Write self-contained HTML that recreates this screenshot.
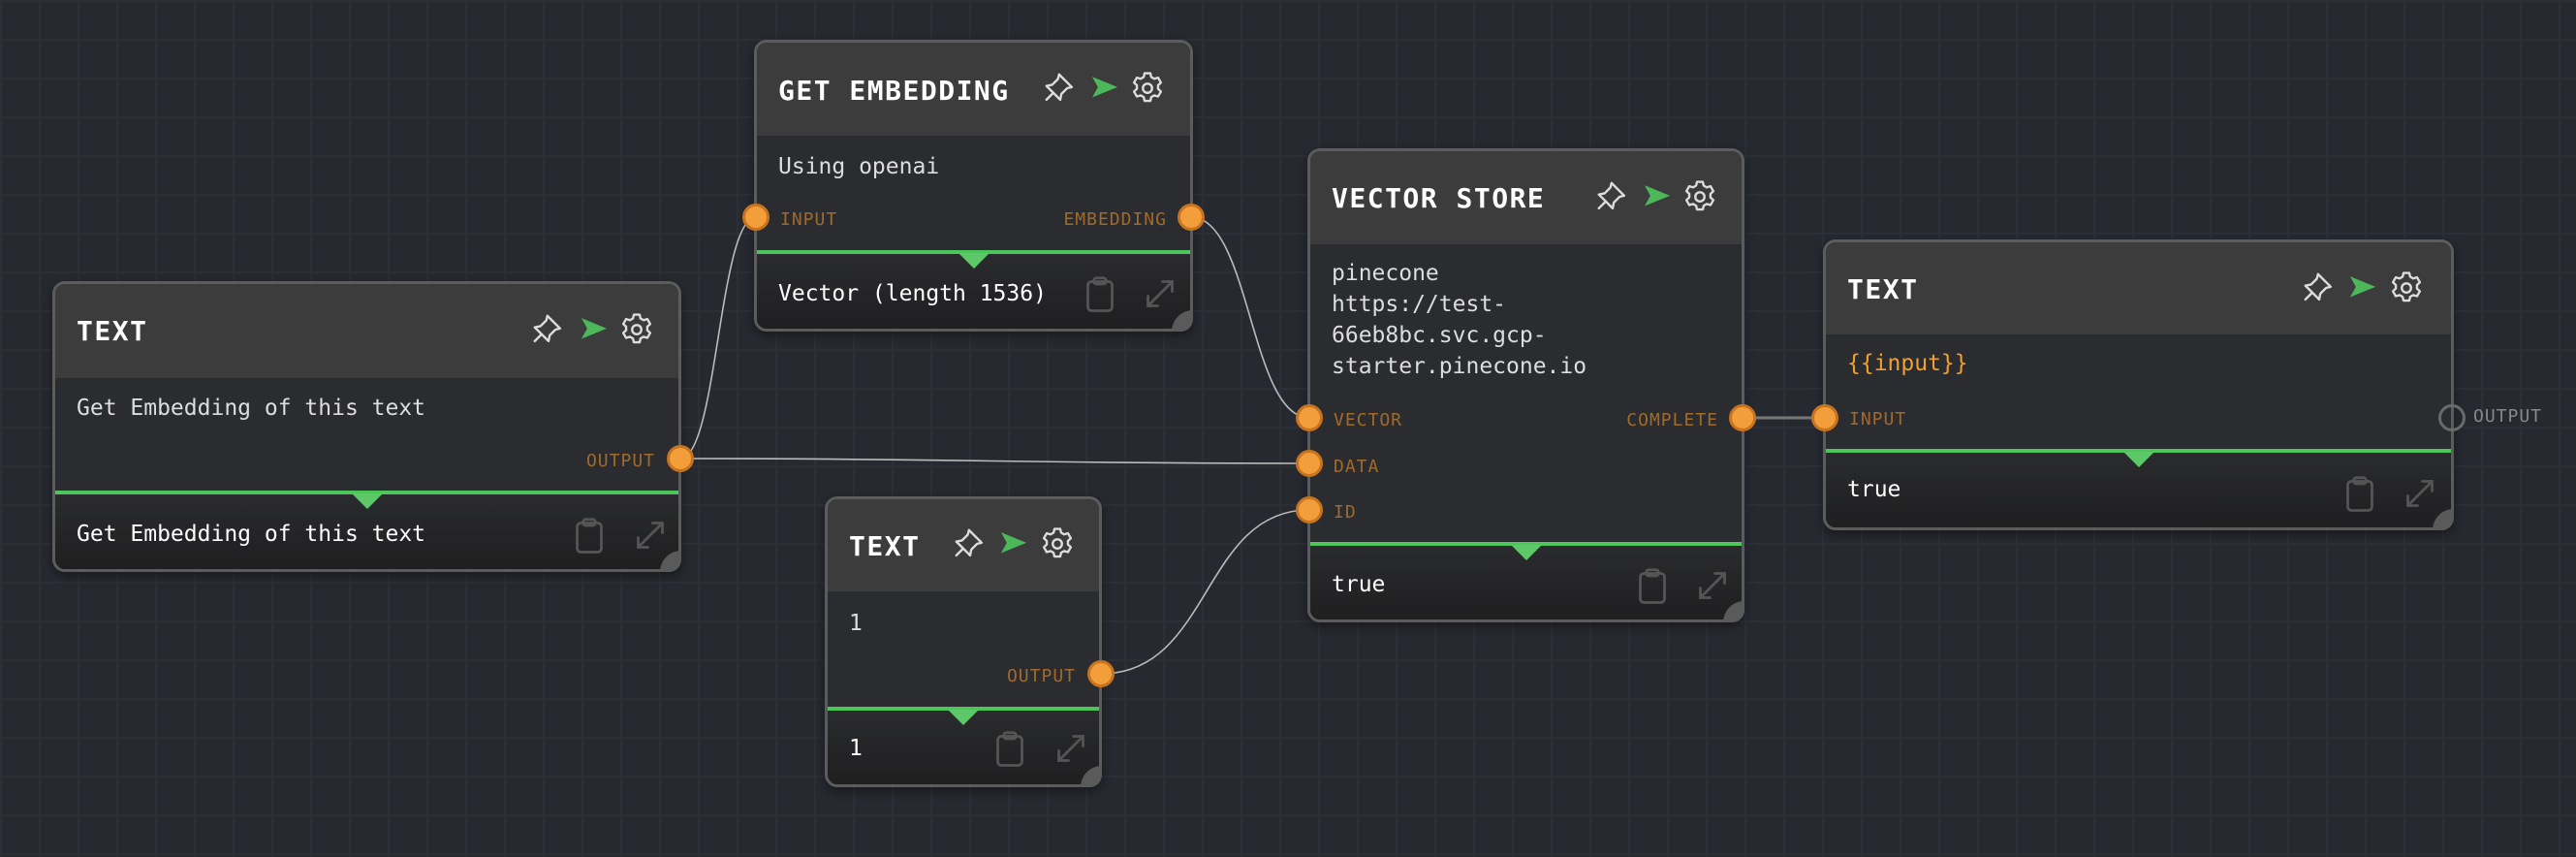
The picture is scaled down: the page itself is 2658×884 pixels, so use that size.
<!DOCTYPE html>
<html><head><meta charset="utf-8"><style>
*{box-sizing:border-box;margin:0;padding:0}
body{width:2658px;height:884px;overflow:hidden;background:#262930;
background-image:linear-gradient(#2b2f37 2px,transparent 2px),linear-gradient(90deg,#2b2f37 2px,transparent 2px);background-size:40px 40px;
font-family:"DejaVu Sans Mono","Liberation Mono",monospace;position:relative}
.n{position:absolute;border:3px solid #5c5c5c;border-radius:13px;background:#2b2c2f;overflow:visible;box-shadow:0 4px 10px rgba(0,0,0,.4)}
.h{position:absolute;left:0;right:0;top:0;background:#3c3c3c;border-radius:10px 10px 0 0}
.t{position:absolute;left:22px;color:#fff;font-weight:bold;font-size:28px;letter-spacing:1.5px}
.b{position:absolute;left:22px;color:#ddd;font-size:23px;line-height:31px}
.g{position:absolute;left:0;right:0;height:4px;background:#4cc55a;z-index:2}
.tri{position:absolute;width:0;height:0;border-left:16px solid transparent;border-right:16px solid transparent;border-top:16px solid #5cc868;margin-left:-16px;z-index:3}
.f{position:absolute;left:0;right:0;bottom:0;background:linear-gradient(#2a2b2e,#1f1f20);border-radius:0 0 10px 10px}
.ft{position:absolute;left:22px;color:#fff;font-size:23px}
.lbl{position:absolute;color:#a06a2c;font-size:18px;letter-spacing:1px}
.p{position:absolute;width:28px;height:28px;border-radius:50%;background:#f29e3a;border:3px solid #c7731f;margin:-14px 0 0 -14px}
.ph{position:absolute;width:28px;height:28px;border-radius:50%;border:3px solid #6a6a6a;margin:-14px 0 0 -14px}
.rc{position:absolute;right:-3px;bottom:-3px;width:22px;height:22px;background:#5a5a5a;border-radius:22px 0 13px 0}
svg.i{position:absolute}
</style></head><body>
<svg width="2658" height="884" style="position:absolute;left:0;top:0">
<g fill="none" stroke="#bbb" stroke-width="1.6">
<path d="M702 473 C740 473 742 224 780 224"/>
<path d="M702 473 C1000 473 1050 478 1351 478"/>
<path d="M1229 224 C1290 224 1290 431 1351 431"/>
<path d="M1136 695 C1250 695 1240 526 1351 526"/>
<path d="M1798 431 C1840 431 1840 431 1883 431" stroke-width="3" stroke="#777"/>
</g></svg>

<div class="n" style="left:54px;top:290px;width:649px;height:300px">
 <div class="h" style="height:97px"></div>
 <div class="t" style="top:32px">TEXT</div>
 <div class="b" style="top:113px">Get Embedding of this text</div>
 <div class="lbl" style="right:24px;top:172px">OUTPUT</div>
 <div class="f" style="top:217px"></div>
 <div class="g" style="top:213px"></div><div class="tri" style="left:322px;top:216px"></div>
 <div class="ft" style="top:245px">Get Embedding of this text</div>
 <div class="rc"></div>
</div>
<div class="n" style="left:778px;top:41px;width:453px;height:301px">
 <div class="h" style="height:96px"></div>
 <div class="t" style="top:33px">GET EMBEDDING</div>
 <div class="b" style="top:113px">Using openai</div>
 <div class="lbl" style="left:24px;top:172px">INPUT</div>
 <div class="lbl" style="right:24px;top:172px">EMBEDDING</div>
 <div class="f" style="top:218px"></div>
 <div class="g" style="top:214px"></div><div class="tri" style="left:224px;top:217px"></div>
 <div class="ft" style="top:246px">Vector (length 1536)</div>
 <div class="rc"></div>
</div>
<div class="n" style="left:1349px;top:153px;width:451px;height:489px">
 <div class="h" style="height:96px"></div>
 <div class="t" style="top:32px">VECTOR STORE</div>
 <div class="b" style="top:110px;line-height:32px">pinecone<br>https://test-<br>66eb8bc.svc.gcp-<br>starter.pinecone.io</div>
 <div class="lbl" style="left:24px;top:267px">VECTOR</div>
 <div class="lbl" style="right:24px;top:267px">COMPLETE</div>
 <div class="lbl" style="left:24px;top:315px">DATA</div>
 <div class="lbl" style="left:24px;top:362px">ID</div>
 <div class="f" style="top:407px"></div>
 <div class="g" style="top:403px"></div><div class="tri" style="left:223px;top:406px"></div>
 <div class="ft" style="top:434px">true</div>
 <div class="rc"></div>
</div>
<div class="n" style="left:851px;top:512px;width:286px;height:300px">
 <div class="h" style="height:95px"></div>
 <div class="t" style="top:32px">TEXT</div>
 <div class="b" style="top:113px">1</div>
 <div class="lbl" style="right:24px;top:172px">OUTPUT</div>
 <div class="f" style="top:218px"></div>
 <div class="g" style="top:214px"></div><div class="tri" style="left:140px;top:217px"></div>
 <div class="ft" style="top:244px">1</div>
 <div class="rc"></div>
</div>
<div class="n" style="left:1881px;top:247px;width:651px;height:300px">
 <div class="h" style="height:95px"></div>
 <div class="t" style="top:32px">TEXT</div>
 <div class="b" style="top:110px;color:#f0a030">{{input}}</div>
 <div class="lbl" style="left:24px;top:172px">INPUT</div>
 <div class="f" style="top:217px"></div>
 <div class="g" style="top:213px"></div><div class="tri" style="left:323px;top:216px"></div>
 <div class="ft" style="top:242px">true</div>
 <div class="rc"></div>
</div>
<div class="lbl" style="left:2552px;top:419px;color:#888">OUTPUT</div>

<div class="p" style="left:702px;top:473px"></div>
<div class="p" style="left:780px;top:224px"></div>
<div class="p" style="left:1229px;top:224px"></div>
<div class="p" style="left:1351px;top:431px"></div>
<div class="p" style="left:1351px;top:478px"></div>
<div class="p" style="left:1351px;top:526px"></div>
<div class="p" style="left:1798px;top:431px"></div>
<div class="p" style="left:1136px;top:695px"></div>
<div class="p" style="left:1883px;top:431px"></div>
<div class="ph" style="left:2530px;top:431px"></div>

<svg width="0" height="0" style="position:absolute"><defs>
<g id="pin" fill="none" stroke="#ddd" stroke-width="2" stroke-linejoin="round" stroke-linecap="round"><path d="M15 4l11 11-4 1-5 5-1 5-12-12 5-1 5-5z"/><path d="M10 20l-6 6"/></g>
<g id="send"><path d="M5 6l22 9-22 9 5-9z" fill="#4cb85a"/></g>
<g id="gear" fill="none" stroke="#ddd" stroke-width="2"><path d="M13.5 3h5l.8 3.3 2.6 1.5 3.3-1 2.5 4.3-2.5 2.4v3l2.5 2.4-2.5 4.3-3.3-1-2.6 1.5-.8 3.3h-5l-.8-3.3-2.6-1.5-3.3 1-2.5-4.3 2.5-2.4v-3L4.3 11.1l2.5-4.3 3.3 1 2.6-1.5z" stroke-linejoin="round"/><circle cx="16" cy="16" r="4"/></g>
<g id="clip" fill="none" stroke="#555" stroke-width="2.2"><rect x="6" y="6" width="20" height="24" rx="3"/><rect x="11" y="3" width="10" height="5" rx="2"/></g>
<g id="exp" fill="none" stroke="#555" stroke-width="2.2" stroke-linecap="round"><path d="M6 26L26 6M18 6h8v8M6 18v8h8"/></g>
</defs></svg>
<svg class="i" viewBox="0 0 32 32" style="left:547px;top:321px" width="38" height="38"><use href="#pin"/></svg>
<svg class="i" viewBox="0 0 32 32" style="left:594px;top:321px" width="38" height="38"><use href="#send"/></svg>
<svg class="i" viewBox="0 0 32 32" style="left:638px;top:321px" width="38" height="38"><use href="#gear"/></svg>
<svg class="i" viewBox="0 0 32 32" style="left:588px;top:532px" width="40" height="40"><use href="#clip"/></svg>
<svg class="i" viewBox="0 0 32 32" style="left:651px;top:532px" width="40" height="40"><use href="#exp"/></svg>

<svg class="i" viewBox="0 0 32 32" style="left:1075px;top:72px" width="38" height="38"><use href="#pin"/></svg>
<svg class="i" viewBox="0 0 32 32" style="left:1121px;top:72px" width="38" height="38"><use href="#send"/></svg>
<svg class="i" viewBox="0 0 32 32" style="left:1165px;top:72px" width="38" height="38"><use href="#gear"/></svg>
<svg class="i" viewBox="0 0 32 32" style="left:1115px;top:283px" width="40" height="40"><use href="#clip"/></svg>
<svg class="i" viewBox="0 0 32 32" style="left:1177px;top:283px" width="40" height="40"><use href="#exp"/></svg>

<svg class="i" viewBox="0 0 32 32" style="left:1645px;top:184px" width="38" height="38"><use href="#pin"/></svg>
<svg class="i" viewBox="0 0 32 32" style="left:1691px;top:184px" width="38" height="38"><use href="#send"/></svg>
<svg class="i" viewBox="0 0 32 32" style="left:1735px;top:184px" width="38" height="38"><use href="#gear"/></svg>
<svg class="i" viewBox="0 0 32 32" style="left:1685px;top:584px" width="40" height="40"><use href="#clip"/></svg>
<svg class="i" viewBox="0 0 32 32" style="left:1747px;top:584px" width="40" height="40"><use href="#exp"/></svg>

<svg class="i" viewBox="0 0 32 32" style="left:982px;top:542px" width="38" height="38"><use href="#pin"/></svg>
<svg class="i" viewBox="0 0 32 32" style="left:1027px;top:542px" width="38" height="38"><use href="#send"/></svg>
<svg class="i" viewBox="0 0 32 32" style="left:1072px;top:542px" width="38" height="38"><use href="#gear"/></svg>
<svg class="i" viewBox="0 0 32 32" style="left:1022px;top:752px" width="40" height="40"><use href="#clip"/></svg>
<svg class="i" viewBox="0 0 32 32" style="left:1085px;top:752px" width="40" height="40"><use href="#exp"/></svg>

<svg class="i" viewBox="0 0 32 32" style="left:2374px;top:278px" width="38" height="38"><use href="#pin"/></svg>
<svg class="i" viewBox="0 0 32 32" style="left:2419px;top:278px" width="38" height="38"><use href="#send"/></svg>
<svg class="i" viewBox="0 0 32 32" style="left:2464px;top:278px" width="38" height="38"><use href="#gear"/></svg>
<svg class="i" viewBox="0 0 32 32" style="left:2415px;top:489px" width="40" height="40"><use href="#clip"/></svg>
<svg class="i" viewBox="0 0 32 32" style="left:2477px;top:489px" width="40" height="40"><use href="#exp"/></svg>
</body></html>
